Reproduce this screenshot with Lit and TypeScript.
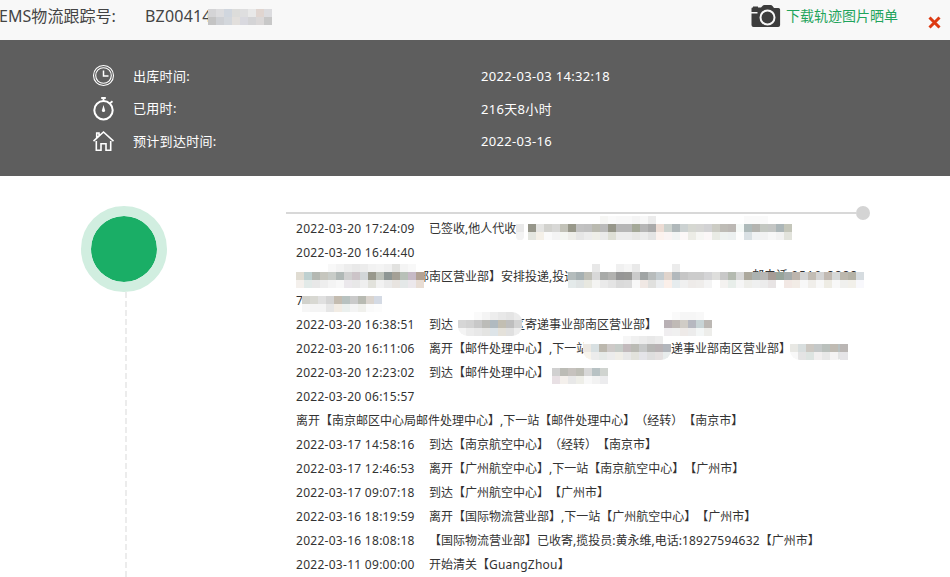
import { LitElement, html, svg, css, nothing } from 'lit';
import { customElement, property } from 'lit/decorators.js';
import { styleMap } from 'lit/directives/style-map.js';

// rows of 8px cells, '-' leaves a cell empty
interface Mask {
  x: number;
  above?: string;
  top: string;
  bottom: string;
  round?: boolean;
}

interface Piece {
  x: number;
  text: string;
  wide?: boolean;
}

interface TrackLine {
  time?: string;
  pieces?: Piece[];
  masks?: Mask[];
}

const CELL = 8;

const LINES: TrackLine[] = [
  {
    time: '2022-03-20 17:24:09',
    pieces: [{ x: 133, text: '已签收,他人代收' }],
    masks: [
      { x: 220, top: 'e9e9e9', bottom: 'f3f3f3', round: true },
      {
        x: 232,
        above: '- - - - - - - - - f6f6f4 fafafa f8f8f8 f8f8f8 f4f4f4 f8f8f8 ececec - - - - - - - - - - - fafafa fafafa fafafa',
        top: '96968a e4e4e2 d2d2ce d8d8d6 c2c2b8 98988a c2c2c2 c0c0c0 babab0 bababa 96968a b6b6b6 b6b6b6 a4a898 b6b6b6 aaaaaa ecdcd4 ccd2ce b0b8ba ccd2d2 d6d8d2 d6d6d4 d2d2d4 ccccc4 bebcb6 bcb8b4 f5f9f7 aebaba b4b4b0 c4c8c2 c4c6c4 acb6b8 c4c6ba',
        bottom: 'e4e6e0 f4f0e8 fafafa f4f4f4 f4f6f2 eeeeea e6e6e6 ececec eeeee8 eaeaea dedfd6 ececec ececec e8e8e6 ececec e4e4e4 fcf2ee faf4f4 f2f4f4 fcf8f8 ecece6 f6f6f4 fbf7f8 e9ebe5 eef2f0 ecf0f0 fdfdfd d9e0e4 f0f2f4 f2f2f2 f7f7f7 f2f2f2 e2e3dc',
      },
    ],
  },
  { time: '2022-03-20 16:44:40' },
  {
    pieces: [
      { x: 121, text: '部南区营业部】安排投递,投递' },
      { x: 456, text: '邮电话:0510-8888', wide: true },
    ],
    masks: [
      {
        x: 0,
        above: '- - - - f8f8f8 f3f3f3 ededed e9e9e9 ececec f2f2f2 f4f4f4 f0f0f0 e2e2e0 f4f4f4 f8f8f8 ffffff',
        top: 'e0dcd2 bed0d0 b4b8b2 c6c6be c8ccc8 b0b8b6 d0d0d0 ccc4c8 d2d6d8 98988c bcc0b8 8e9694 a4a096 b8c0b8 c6bac6 b2a294',
        bottom: 'f4f0ec e2eae8 e8e8e8 eeeeee f4f4f4 f8f8f8 ebe8ec e8e8e8 efefef e2e2dc f2f2f2 eaeaea e8e4e0 e4e8e8 ece8ec e8ddd4',
      },
      {
        x: 272,
        above: 'ffffff - - e8e8e8 - - f0f0f0 f5f5f5 e9e9e9 - - - - ececec',
        top: 'b4bcbc a6b0b2 bebeb6 d8d8d8 a8aaa8 b2b2b0 969696 989896 cacaca a0a4a4 b8bcbc c4ccd0 e0d4cc b2b8bc c6c6c6 cccccc cccccc d4d4d6 dededc c8c8c8 b4bab0 d8d8d8 aca89c acb2b0 b8b8b6 a69c96 97a49b a6acac bdb5ad d4d4d4 c2bcb4 d4d4d4 c2bab2 d6d8d8 bcb8ae b4b2a6 d6dce0',
        bottom: 'e4eaea e0e4e4 e8e8e0 f4f4f2 eaeaea e4e4e4 dadada dcdcdc f8f8f8 f0e8e4 e0e0de eceef0 fbefe9 e6ecee f0f0f0 eeebe9 efedeb f4f4f4 ffffff f4f2f0 e8eeea f6f6f6 eeeeea eff0f0 ececec e8e4e4 ffffff f2e8e4 f2ece6 f8f8f8 f0eeea f8f8f8 eeece4 f8f8f8 f0f0ee f2f0ea f8f8fc',
      },
    ],
  },
  {
    pieces: [{ x: 0, text: '7' }],
    masks: [
      {
        x: 6,
        top: 'd2d2cc d8d8d2 e0e0e0 d4d4d4 c4bcb0 b8c2c0 cacaca b8bab2 dad4ce d4dae4',
        bottom: 'f6f6f6 f4f4f4 f4f4f4 e6e6e6 f2ece4 ebf0ee f4f4f4 f0f0ec fafafa fcfcfc',
      },
    ],
  },
  {
    time: '2022-03-20 16:38:51',
    pieces: [
      { x: 133, text: '到达【' },
      { x: 217, text: '区寄递事业部南区营业部】' },
    ],
    masks: [
      {
        x: 162,
        above: 'ffffff - fafafa f4f4f4 ededed e8e8e8 e4e4e4 ebebeb',
        top: 'd6d6d6 d2d2d2 c8c8c8 bcbcb8 b0bac0 c2beb2 bebebe d2d2d2',
        bottom: 'f4f4f4 ececec e8e8e8 e4e4e2 dde4e8 e4e1da e0e0e0 ededed',
        round: true,
      },
      {
        x: 368,
        above: '- fafafa f6f6f6 f6f6f6 f8f8f8 -',
        top: 'b8b0b4 c0bab6 d0ccc6 b6b8c0 c8d4d6 bcb8b4',
        bottom: 'f0eef0 f0f0f0 eeeae8 ececec f3f6f6 ededea',
      },
    ],
  },
  {
    time: '2022-03-20 16:11:06',
    pieces: [
      { x: 133, text: '离开【邮件处理中心】,下一站' },
      { x: 375, text: '递事业部南区营业部】' },
    ],
    masks: [
      {
        x: 287,
        above: 'ffffff - - - - f6f6f6 f0f0f0 ececec e8e8e8 ececec -',
        top: 'ece8e2 d8e0e2 bcb8ae cecac8 c6ccc8 c2babc babab4 c6c8c8 b6b6b4 b8b2b4 b2b6bc',
        bottom: 'f8f4ec ececec e6eae8 ececec f0eee8 e8e8e8 e2e2dc e4e4e8 dedede e4e0e0 e8ecec',
        round: true,
      },
      {
        x: 494,
        top: 'e8e8e4 d8dede ccc8c2 c4c8c8 bac0bc c0bbb3 b8c0c0',
        bottom: 'f8f8f8 e4e4e4 dde4e1 f1efef e8e8e8 f5f3f3 e4e4e4',
        round: true,
      },
      { x: 544, top: 'bab6b4', bottom: 'e5e4e7' },
    ],
  },
  {
    time: '2022-03-20 12:23:02',
    pieces: [{ x: 133, text: '到达【邮件处理中心】' }],
    masks: [
      {
        x: 256,
        top: 'd0d0d0 bcbcb6 c6c2be bebeb6 d8d8d8 b8c2c4 d0d4d0',
        bottom: 'e8e0e4 f4f0ec e8e8e8 eeeee8 f8f8f8 f2f2f2 ececee',
      },
    ],
  },
  { time: '2022-03-20 06:15:57' },
  { pieces: [{ x: 0, text: '离开【南京邮区中心局邮件处理中心】,下一站【邮件处理中心】（经转）【南京市】' }] },
  { time: '2022-03-17 14:58:16', pieces: [{ x: 133, text: '到达【南京航空中心】（经转）【南京市】' }] },
  { time: '2022-03-17 12:46:53', pieces: [{ x: 133, text: '离开【广州航空中心】,下一站【南京航空中心】【广州市】' }] },
  { time: '2022-03-17 09:07:18', pieces: [{ x: 133, text: '到达【广州航空中心】【广州市】' }] },
  { time: '2022-03-16 18:19:59', pieces: [{ x: 133, text: '离开【国际物流营业部】,下一站【广州航空中心】【广州市】' }] },
  { time: '2022-03-16 18:08:18', pieces: [{ x: 133, text: '【国际物流营业部】已收寄,揽投员:黄永维,电话:18927594632【广州市】' }] },
  { time: '2022-03-11 09:00:00', pieces: [{ x: 133, text: '开始清关【GuangZhou】' }] },
];

const NUMBER_MASK = [
  'd4d4d6 dcdcde d0d6de dcdcda dededf e8e8e8 e0d5d0 dcdcdf',
  'c4c4c4 ced0d4 d3d7dc e2dfdc d9d9df d4d4d6 dbd8d8 c8c8c8',
];

@customElement('mosaic-mask')
export class MosaicMask extends LitElement {
  @property({ attribute: false }) rows: string[] = [];
  @property({ type: Boolean }) round = false;

  static styles = css`
    :host {
      display: block;
      line-height: 0;
    }

    svg {
      display: block;
    }

    .round {
      border-radius: 10px / 9px;
    }
  `;

  render() {
    const cells = this.rows.map((r) => r.split(' '));
    const w = Math.max(...cells.map((c) => c.length)) * CELL;
    const h = this.rows.length * CELL;
    return html`
      <svg class=${this.round ? 'round' : ''} width=${w} height=${h} shape-rendering="crispEdges">
        ${cells.map((row, y) =>
          row.map((c, x) =>
            c === '-'
              ? nothing
              : svg`<rect x=${x * CELL} y=${y * CELL} width=${CELL} height=${CELL} fill=${'#' + c} />`
          )
        )}
      </svg>
    `;
  }
}

@customElement('track-line')
export class TrackLineRow extends LitElement {
  @property({ attribute: false }) line: TrackLine = {};

  static styles = css`
    :host {
      display: grid;
      grid-template-columns: minmax(0, 1fr);
      height: 24px;
      line-height: 24px;
      font-size: 12px;
      color: #333;
      white-space: nowrap;
      text-spacing-trim: space-all;
    }

    .time,
    .piece,
    mosaic-mask {
      grid-area: 1 / 1;
    }

    .time {
      letter-spacing: 0.28px;
    }

    .latin {
      letter-spacing: 0.22px;
    }

    .wide {
      margin-top: -1px;
    }

    .wide .latin {
      letter-spacing: 0.9px;
    }

    mosaic-mask {
      margin-top: -1px;
    }
  `;

  // letters and digits are set slightly looser than the Chinese text
  pieceText(text: string) {
    return text
      .split(/([\w-]+)/)
      .map((part) => (/^\w/.test(part) ? html`<span class="latin">${part}</span>` : part));
  }

  render() {
    const { time, pieces = [], masks = [] } = this.line;
    return html`
      ${time ? html`<span class="time">${time}</span>` : nothing}
      ${pieces.map(
        (p) => html`<span
          class=${p.wide ? 'piece wide' : 'piece'}
          style=${styleMap({ marginLeft: `${p.x}px` })}
          >${this.pieceText(p.text)}</span
        >`
      )}
      ${masks.map(
        (m) => html`<mosaic-mask
          style=${styleMap({ marginLeft: `${m.x}px` })}
          .rows=${[m.above || '-', m.top, m.bottom]}
          ?round=${m.round}
        ></mosaic-mask>`
      )}
    `;
  }
}

@customElement('app-root')
export class AppRoot extends LitElement {
  static styles = css`
    :host {
      display: flex;
      flex-direction: column;
      width: 950px;
      height: 577px;
      overflow: hidden;
      background: #fff;
      font-family: 'Noto Sans', 'Noto Sans CJK SC', sans-serif;
    }

    .bar {
      display: flex;
      flex: none;
      height: 40px;
      box-sizing: border-box;
      background: #f8f8f8;
      color: #444;
      font-size: 16px;
      line-height: 33px;
      white-space: nowrap;
    }

    .label {
      width: 146px;
      margin-left: -1px;
      letter-spacing: 0.05px;
    }

    .number {
      width: 63px;
      letter-spacing: 0.2px;
    }

    .bar mosaic-mask {
      margin-top: 9px;
      flex: 1;
    }

    .camera {
      margin: 4px 5px 0 0;
    }

    .download {
      color: #1fa45c;
      font-size: 14px;
      line-height: 31px;
      width: 142px;
    }

    .close {
      margin: 16px 9px 0 0;
    }

    .summary {
      display: flex;
      flex-direction: column;
      flex: none;
      height: 136px;
      box-sizing: border-box;
      padding: 20px 0 0 92px;
      background: #5e5e5e;
      color: #fff;
      font-size: 13px;
    }

    .item {
      display: flex;
      align-items: center;
      height: 32.6px;
    }

    .item svg {
      margin-right: 17px;
    }

    .item .name {
      width: 348px;
      padding-bottom: 2px;
      letter-spacing: 0.3px;
    }

    .item .value {
      letter-spacing: 0.32px;
    }

    .body {
      display: flex;
      flex: 1;
      min-height: 0;
    }

    .rail {
      display: flex;
      flex-direction: column;
      align-items: center;
      width: 86px;
      margin: 30px 119px 0 81px;
    }

    .node {
      flex: none;
      width: 66px;
      height: 66px;
      border: 10px solid #d1eee0;
      border-radius: 50%;
      background: #1aae66;
      background-clip: padding-box;
    }

    .dashes {
      flex: 1;
      width: 2px;
      margin-left: 3px;
      background: repeating-linear-gradient(#ececec 0 6px, #fff 6px 9px);
    }

    .list {
      width: 584px;
      margin-top: 30px;
    }

    .rule {
      display: flex;
      align-items: center;
      height: 14px;
    }

    .rule i {
      flex: 1;
      height: 2px;
      background: #d8d8d8;
    }

    .rule b {
      width: 14px;
      height: 14px;
      border-radius: 50%;
      background: #d4d4d4;
    }

    .lines {
      margin: -3px 0 0 10px;
    }
  `;

  clockIcon() {
    return svg`
      <circle cx="11.5" cy="11.5" r="10" stroke-width="1.1" />
      <circle cx="11.5" cy="11.5" r="7.8" stroke-width="1.1" />
      <path d="M11.5 6.500V12h5" stroke-width="1.5" />
    `;
  }

  stopwatchIcon() {
    return svg`
      <circle cx="11.5" cy="13.3" r="9.2" stroke-width="2" />
      <path d="M9.200 1h4.600M11.500 1v4M18 6.200l2.500-2" stroke-width="1.8" />
      <path d="M11.500 8l1.600 5.500a1.600 1.600 0 1 1-3.200 0z" fill="#fff" stroke="none" />
    `;
  }

  homeIcon() {
    return svg`
      <path d="M1.500 12.200L11.500 3l10 9.200M4.700 9.600V4H7v3M4.300 12v9.300H9v-6.600h5v6.600h4.700V12" stroke-width="1.6" />
    `;
  }

  item(icon: unknown, name: string, value: string) {
    return html`
      <div class="item">
        <svg width="24" height="24" viewBox="0 0 24 24" fill="none" stroke="#fff">${icon}</svg>
        <span class="name">${name}</span>
        <span class="value">${value}</span>
      </div>
    `;
  }

  render() {
    return html`
      <div class="bar">
        <span class="label">EMS物流跟踪号:</span>
        <span class="number">BZ00414</span>
        <mosaic-mask .rows=${NUMBER_MASK}></mosaic-mask>
        <svg class="camera" width="30" height="24" viewBox="0 0 30 24">
          <path
            d="M.5 4.500q0-1 1-1h.5V2.500h5v1h3L11.500 2q.6-1 2-1h6q1.400 0 2 1l1.500 2h4.500q1.600 0 1.600 1.600V21q0 2-2 2H2.500q-2 0-2-2V9.500h6V8h-6z"
            fill="#3d3d3d"
          />
          <circle cx="16.500" cy="13.500" r="7" fill="#3d3d3d" stroke="#f8f8f8" stroke-width="2" />
        </svg>
        <span class="download">下载轨迹图片晒单</span>
        <svg class="close" width="13" height="13" viewBox="0 0 13 13">
          <path d="M1.500 1.500l10 10M11.500 1.500l-10 10" stroke="#dd3a12" stroke-width="3" />
        </svg>
      </div>
      <div class="summary">
        ${this.item(this.clockIcon(), '出库时间:', '2022-03-03 14:32:18')}
        ${this.item(this.stopwatchIcon(), '已用时:', '216天8小时')}
        ${this.item(this.homeIcon(), '预计到达时间:', '2022-03-16')}
      </div>
      <div class="body">
        <div class="rail">
          <div class="node"></div>
          <div class="dashes"></div>
        </div>
        <div class="list">
          <div class="rule"><i></i><b></b></div>
          <div class="lines">${LINES.map((l) => html`<track-line .line=${l}></track-line>`)}</div>
        </div>
      </div>
    `;
  }
}
